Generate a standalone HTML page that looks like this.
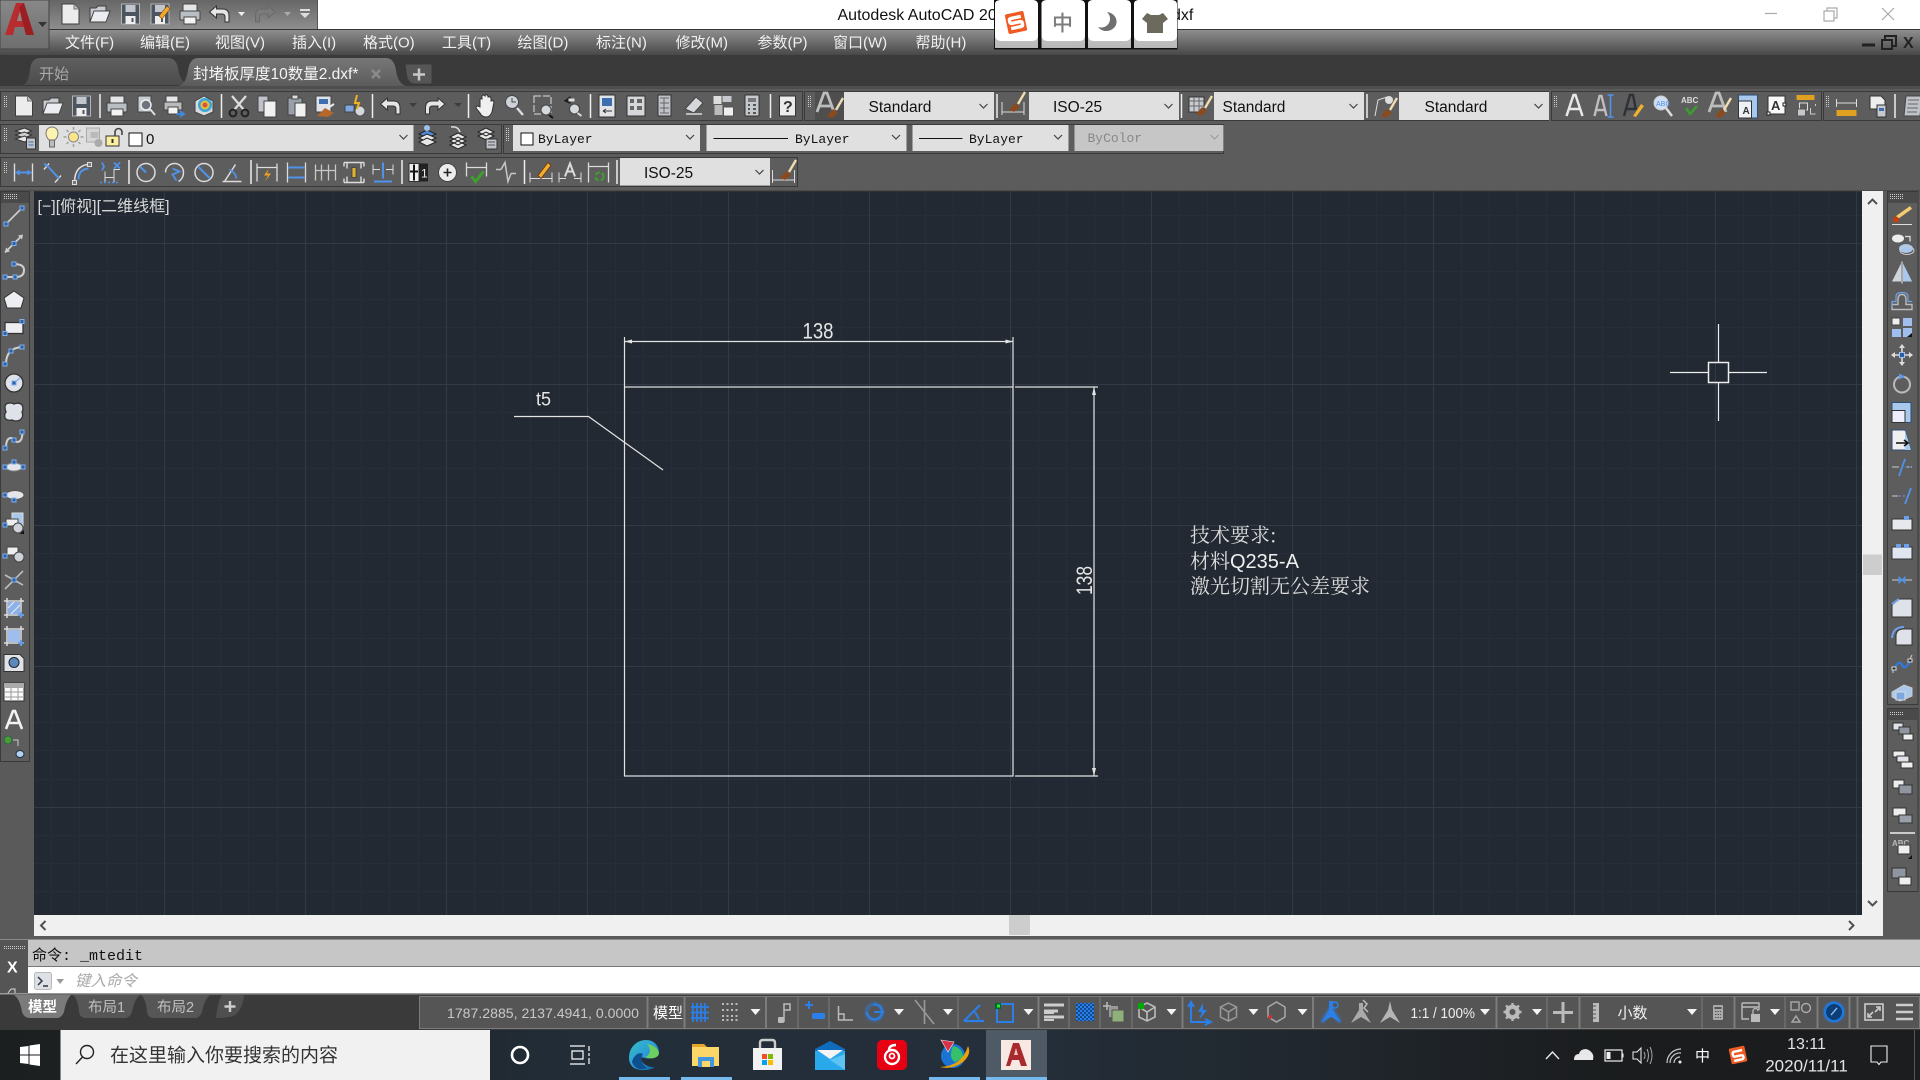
<!DOCTYPE html>
<html><head><meta charset="utf-8"><title>AutoCAD</title>
<style>
html,body{margin:0;padding:0;background:#5a5a5a;overflow:hidden}
svg{display:block}
text{font-family:"Liberation Sans","Noto Sans CJK SC",sans-serif;white-space:pre}
.m{font-size:15px;fill:#f0f0f0}
.dd{font-size:15.5px;fill:#111}
.by{font-family:"Liberation Mono","Noto Sans CJK SC",monospace;font-size:13px;fill:#111}
.cad{fill:#e6e6e6}
.song{font-family:"Noto Serif CJK SC",serif;font-size:20px;fill:#ddd}
.ln{fill:none;stroke:#e4e4e4;stroke-width:1.2}
.sep{stroke:#eee;stroke-width:1.5}
</style></head><body>
<svg xmlns="http://www.w3.org/2000/svg" width="1920" height="1080" viewBox="0 0 1920 1080">
<defs>
<linearGradient id="gq" x1="0" y1="0" x2="0" y2="1"><stop offset="0" stop-color="#666"/><stop offset="1" stop-color="#8e8e8e"/></linearGradient>
<linearGradient id="gm" x1="0" y1="0" x2="0" y2="1"><stop offset="0" stop-color="#8e8e8e"/><stop offset="1" stop-color="#484848"/></linearGradient>
<linearGradient id="ga" x1="0" y1="0" x2="0" y2="1"><stop offset="0" stop-color="#888"/><stop offset="1" stop-color="#6e6e6e"/></linearGradient>
<linearGradient id="gt" x1="0" y1="0" x2="0" y2="1"><stop offset="0" stop-color="#5f5f5f"/><stop offset="1" stop-color="#4c4c4c"/></linearGradient>
<linearGradient id="gta" x1="0" y1="0" x2="0" y2="1"><stop offset="0" stop-color="#777"/><stop offset="1" stop-color="#5c5c5c"/></linearGradient>
<linearGradient id="gk" x1="0" y1="0" x2="0" y2="1"><stop offset="0" stop-color="#e4e4e4"/><stop offset="1" stop-color="#b8b8b8"/></linearGradient>
<linearGradient id="gb" x1="0" y1="0" x2="1" y2="0"><stop offset="0" stop-color="#1b1f20"/><stop offset=".18" stop-color="#1f2529"/><stop offset=".3" stop-color="#222d38"/><stop offset=".52" stop-color="#242f3b"/><stop offset=".7" stop-color="#20262c"/><stop offset=".85" stop-color="#1a1c1d"/><stop offset="1" stop-color="#1b1d1e"/></linearGradient>
<linearGradient id="gedge" x1="0" y1="0" x2="1" y2="1"><stop offset="0" stop-color="#35c1c4"/><stop offset=".5" stop-color="#2d9cd8"/><stop offset="1" stop-color="#0c5aa0"/></linearGradient>
<pattern id="grid" x="164" y="243" width="141" height="141" patternUnits="userSpaceOnUse">
<path d="M28.5 0V141M56.5 0V141M84.5 0V141M113.5 0V141M0 28.5H141M0 56.5H141M0 84.5H141M0 113.5H141" stroke="#272e39" fill="none"/>
<path d="M.5 0V141M0 .5H141" stroke="#323a48" fill="none"/>
</pattern>
<pattern id="dots" width="2" height="2" patternUnits="userSpaceOnUse"><rect width="1" height="1" fill="#ccc"/></pattern>
<pattern id="dotsb" width="4" height="4" patternUnits="userSpaceOnUse"><rect width="2" height="2" fill="#134a8f"/><rect x="2" y="2" width="2" height="2" fill="#134a8f"/></pattern>
<filter id="glow" x="-30%" y="-30%" width="160%" height="160%"><feGaussianBlur stdDeviation="1.2"/></filter>

<!-- common toolbar icons -->
<g id="new"><path d="M-8-10H4L9-5V10H-8Z" fill="#ececec" stroke="#3d3d3d"/><path d="M4-10V-5H9" fill="#bbb" stroke="#777"/></g>
<g id="open"><path d="M-10 8V-6H-4L-2-8H6V-3H9L5 8Z" fill="#c9ccd2" stroke="#3d3d3d"/><path d="M-10 8L-6-3H10L6 8Z" fill="#ecedf0" stroke="#444"/></g>
<g id="save"><rect x="-9" y="-10" width="18" height="20" fill="#4d5560" stroke="#b5b5b5"/><rect x="-5" y="-9" width="10" height="7" fill="#c3c6cc"/><rect x="-5" y="2" width="10" height="8" fill="#eee"/><rect x="1" y="4" width="2" height="4" fill="#555"/></g>
<g id="saveas"><use href="#save"/><path d="M-1 2L7-8L10-5L2 5Z" fill="#f0a830" stroke="#7a4a10" stroke-width=".6"/></g>
<g id="print"><rect x="-7" y="-10" width="14" height="7" fill="#e4e6e9" stroke="#444"/><rect x="-10" y="-3" width="20" height="9" rx="1" fill="#b9bec5" stroke="#444"/><rect x="-6" y="3" width="12" height="7" fill="#f3f3f3" stroke="#444"/></g>
<g id="preview"><path d="M-8-10H5V6H-8Z" fill="#c8ccd2" stroke="#444"/><circle cx="0" cy="-1" r="5" fill="#6d747e" stroke="#eee" stroke-width="1.5"/><path d="M4 3L9 9" stroke="#ddd" stroke-width="2"/></g>
<g id="plot"><rect x="-8" y="-10" width="12" height="6" fill="#e4e6e9" stroke="#444"/><rect x="-10" y="-4" width="18" height="8" fill="#bbb" stroke="#444"/><rect x="-6" y="1" width="10" height="7" fill="#f3f3f3" stroke="#444"/><path d="M2 8H9M6 5L10 8L6 11" fill="none" stroke="#3d8be0" stroke-width="1.8"/></g>
<g id="p3d"><path d="M-9-5L0-10L9-5V6L0 10L-9 6Z" fill="#d7d9dd" stroke="#444"/><circle cx="1" cy="-1" r="7" fill="#3aa7d8"/><circle cx="1" cy="-1" r="4.5" fill="#e6c23a"/><circle cx="1" cy="-1" r="2.5" fill="#d6553a"/></g>
<g id="cut"><path d="M-7-10L5 4M7-10L-5 4" stroke="#ddd" stroke-width="2.2"/><circle cx="-6" cy="7" r="3.4" fill="none" stroke="#222" stroke-width="2"/><circle cx="6" cy="7" r="3.4" fill="none" stroke="#222" stroke-width="2"/></g>
<g id="copy"><path d="M-9-10H1V6H-9Z" fill="#bfc3c9" stroke="#444"/><path d="M-3-5H9V11H-3Z" fill="#f1f1f1" stroke="#444"/></g>
<g id="paste"><rect x="-9" y="-8" width="14" height="17" fill="#9aa0a8" stroke="#444"/><rect x="-5" y="-11" width="6" height="4" fill="#ddd" stroke="#444"/><path d="M-2-3H9V11H-2Z" fill="#f1f1f1" stroke="#444"/></g>
<g id="match"><rect x="-9" y="-10" width="15" height="16" fill="#dfe3e9" stroke="#444"/><rect x="-6" y="-7" width="9" height="5" fill="#3d6fb0"/><path d="M-8 10L0 2L9 7L3 11Z" fill="#b5682a"/><path d="M3 2L9-2" stroke="#e8e8e8" stroke-width="2"/></g>
<g id="blockb"><rect x="-10" y="-1" width="9" height="7" fill="#7ea7e0" stroke="#444"/><circle cx="5" cy="5" r="5" fill="#d5d8dd" stroke="#555"/><path d="M2-11L0-3H4L2 3" fill="none" stroke="#f0b020" stroke-width="2"/></g>
<g id="undo"><path d="M-10-2L-3-8V-5H3Q9.500-5 9.500 2V8H5.500V3Q5.500 0 2.500 0H-3V4Z" fill="#e6e6e6" stroke="#333"/></g>
<g id="redo"><path d="M10-2L3-8V-5H-3Q-9.500-5-9.500 2V8H-5.500V3Q-5.500 0-2.500 0H3V4Z" fill="#e6e6e6" stroke="#333"/></g>
<g id="undog"><path d="M-10-2L-3-8V-5H3Q9.500-5 9.500 2V8H5.500V3Q5.500 0 2.500 0H-3V4Z" fill="#7b7b7b" stroke="#6a6a6a"/></g>
<g id="tri"><path d="M-4-2H4L0 2Z" fill="#3d3d3d"/></g>
<g id="tril"><path d="M-4-2H4L0 2Z" fill="#cfcfcf"/></g>
<g id="pan"><path d="M-6 1V-6Q-6-8-4-7V-10Q-3-12-1-10V-11Q1-12 2-10V-9Q4-10 5-8V-5Q7-6 8-4L6 6Q4 11 0 11Q-4 11-6 7L-10 2Q-10 0-8 0Z" fill="#f0f0f0" stroke="#333"/></g>
<g id="zoomr"><circle cx="-2" cy="-4" r="6.5" fill="#cfd3d9" stroke="#444"/><path d="M-2-8V-4H2" fill="none" stroke="#444"/><path d="M3 2L9 9" stroke="#ddd" stroke-width="2.4"/></g>
<g id="zoomw"><rect x="-9" y="-10" width="17" height="18" fill="none" stroke="#ddd" stroke-dasharray="7 2"/><circle cx="3" cy="4" r="5" fill="#d5d8dd" stroke="#444"/><path d="M6 9L10 12" stroke="#111" stroke-width="2"/></g>
<g id="zoomp"><path d="M-9-5L-2-10V-2Z" fill="#1f1f1f"/><path d="M-4-6H2" stroke="#ddd" stroke-width="3"/><circle cx="2" cy="3" r="5" fill="#d5d8dd" stroke="#444"/><path d="M5 7L9 10" stroke="#ddd" stroke-width="2"/></g>
<g id="props"><rect x="-8" y="-11" width="16" height="22" fill="#e1e3e6" stroke="#333"/><rect x="-5" y="-8" width="10" height="8" fill="#3d6fb0"/><path d="M-4 5H5M-4 5L-1 3M-4 5L-1 7" stroke="#333" fill="none"/></g>
<g id="dc"><rect x="-9" y="-10" width="18" height="20" fill="#d5d7db" stroke="#333"/><path d="M-6-7H-2V-3H-6ZM1-7H6V-3H1ZM-6 0H-2V4H-6ZM1 0H6V4H1Z" fill="#666"/></g>
<g id="pal"><rect x="-7" y="-11" width="13" height="21" fill="#bfc3c9" stroke="#333"/><path d="M-5-8H4M-5-3H4M-5 2H4M-5 7H4M-1-8V7" stroke="#666"/></g>
<g id="sheet"><path d="M-9 3L2-9L9-3L0 7Z" fill="#d5d7db" stroke="#444"/><path d="M-8 7H8V9H-8Z" fill="#bbb"/></g>
<g id="mark"><rect x="-10" y="-10" width="8" height="8" fill="#ddd"/><rect x="-1" y="-10" width="9" height="6" fill="#c5c8cd"/><rect x="-9" y="-1" width="8" height="10" fill="#bbb"/><rect x="0" y="1" width="10" height="9" fill="#eee" stroke="#555"/></g>
<g id="calc"><rect x="-7" y="-11" width="14" height="21" rx="1" fill="#c5c8cd" stroke="#333"/><rect x="-4" y="-8" width="8" height="4" fill="#777"/><path d="M-4-1H-2M1-1H4M-4 3H-2M1 3H4M-4 7H-2M1 7H4" stroke="#555" stroke-width="2"/></g>
<g id="help"><rect x="-8" y="-10" width="16" height="20" fill="#ececec" stroke="#333"/><text x="-4.5" y="6" font-size="16" font-weight="700" fill="#333">?</text></g>
<g id="brush"><path d="M-7 10L-1 3L4 7L-2 12Z" fill="#8a4a20"/><path d="M2 4L9-8" stroke="#f0ddb0" stroke-width="2.4"/></g>
<g id="atext"><path d="M-9 8L-2-11H1L8 8M-6 2H5" fill="none" stroke="#bdbdbd" stroke-width="2.8"/></g>
<g id="dimicon"><path d="M-11-2V11M11-2V11M-11 8H11" stroke="#dcdcdc" fill="none"/></g>
<!-- row 1 text group -->
<g id="A1"><path d="M-8 10L-1-11H1L8 10M-5 3H5" fill="none" stroke="#e8e8e8" stroke-width="2.5"/></g>
<g id="A2"><path d="M-9 10L-4-10H-2L3 10M-7 4H1" fill="none" stroke="#bdbdbd" stroke-width="2.4"/><path d="M7-11V11M4-11H10M4 11H10" stroke="#4f93ea" fill="none" stroke-width="1.6"/></g>
<g id="A3"><path d="M-9 10L-3-11H0L3 4M-6 3H2" fill="none" stroke="#2e3237" stroke-width="2.4"/><path d="M0 10L8-2L11 0L3 11Z" fill="#f0b030"/></g>
<g id="A4"><circle cx="-2" cy="-3" r="7" fill="#cfdff5" stroke="#ccc"/><text x="-7" y="0" font-size="7" fill="#4f93ea">ABC</text><path d="M3 2L9 10" stroke="#ddd" stroke-width="2.4"/></g>
<g id="A5"><text x="-10" y="-3" font-size="8" font-weight="700" fill="#ddd">ABC</text><path d="M-5 2L-1 8L6 0" fill="none" stroke="#39a02c" stroke-width="2.4"/></g>
<g id="A7"><rect x="-10" y="-11" width="19" height="23" fill="#a8c8ec" stroke="#2d4d78"/><path d="M-10-5H3V12H-10Z" fill="#eef2f6" stroke="#333"/><text x="-6" y="8" font-size="10" font-weight="700" fill="#333">A</text></g>
<g id="A8"><rect x="-9" y="-10" width="17" height="18" fill="#fafafa" stroke="#333"/><text x="-6" y="4" font-size="13" font-weight="700" fill="#333">A</text><rect x="6" y="-3" width="3" height="3" fill="#eee" stroke="#222"/><rect x="-10" y="6" width="3" height="3" fill="#eee" stroke="#222"/></g>
<g id="A9"><rect x="-10" y="-11" width="18" height="5" fill="#e0a020"/><rect x="-7" y="-3" width="8" height="7" fill="none" stroke="#ddd"/><rect x="-9" y="3" width="8" height="7" fill="#c5c8cd" stroke="#555"/><path d="M4 2V8H9M9 0V-2" stroke="#ccc" fill="none"/></g>
<g id="meas"><path d="M-10-7V1M10-7V1M-10-3H10" stroke="#ddd" fill="none"/><rect x="-10" y="4" width="20" height="6" fill="#e0a020"/></g>
<g id="lay2"><path d="M-6-10H5L9-6V3H-6Z" fill="#eee" stroke="#333"/><rect x="1" y="-1" width="9" height="12" fill="#c5c8cd" stroke="#333"/><rect x="3" y="2" width="5" height="3" fill="#3d6fb0"/></g>
<g id="scroll"><path d="M-7-10H9L7 10H-9Z" fill="#bfc3c9" stroke="#444"/><path d="M-5-6H6M-5-2H5M-6 2H5M-6 6H4" stroke="#666"/></g>
<!-- row 2 -->
<g id="layerm"><path d="M-9-7L0-10L7-7L0-4Z" fill="#e4e4e4" stroke="#333"/><path d="M-9-3L0-6L7-3L0 0Z" fill="#d0d0d0" stroke="#333"/><path d="M-9 1L0-2L7 1L0 4Z" fill="#e4e4e4" stroke="#333"/><rect x="2" y="0" width="9" height="11" fill="#bfc3c9" stroke="#333"/><path d="M4 4H9M4 7H9" stroke="#3d6fb0"/></g>
<g id="lamp"><path d="M-3 3Q-6 0-6-4A6 6 0 0 1 6-4Q6 0 3 3Z" fill="#fdf3b0" stroke="#777"/><rect x="-2.500" y="3" width="5" height="7" fill="#bbb" stroke="#666"/></g>
<g id="sun"><circle r="5" fill="#fbe58a" stroke="#888"/><path d="M0-10V-7M0 7V10M-10 0H-7M7 0H10M-7-7L-5-5M5 5L7 7M-7 7L-5 5M5-5L7-7" stroke="#a0a0a0" stroke-width="1.5"/></g>
<g id="free"><rect x="-8" y="-9" width="13" height="14" fill="#d5d5d5" stroke="#aaa"/><rect x="-4" y="-5" width="8" height="6" fill="#bbb"/><circle cx="4" cy="6" r="4" fill="#aaa"/></g>
<g id="lock"><rect x="-8" y="-1" width="13" height="10" fill="#fcf0a0" stroke="#333"/><rect x="-2.500" y="2" width="2" height="4" fill="#333"/><path d="M1-1V-5A3.500 3.500 0 0 1 8-5V-2" fill="none" stroke="#444" stroke-width="1.6"/></g>
<g id="lay3"><path d="M-9-4L-1-8L8-4L-1 0Z" fill="#4f8bd8" stroke="#222"/><path d="M-9 0L-1-4L8 0L-1 4Z" fill="#e8e8e8" stroke="#222"/><path d="M-9 4L-1 0L8 4L-1 8Z" fill="#e8e8e8" stroke="#222"/><circle cx="-1" cy="-10" r="3" fill="#9ec0ea"/></g>
<g id="lay4"><path d="M-8-1L0-5L8-1L0 3ZM-8 3L0-1L8 3L0 7ZM-8 7L0 3L8 7L0 11Z" fill="#e8e8e8" stroke="#222"/><path d="M-7-11Q0-12 2-6" fill="none" stroke="#ddd" stroke-width="1.5"/></g>
<g id="lay5"><path d="M-9-6L-1-10L7-6L-1-2ZM-9-2L-1-6L7-2L-1 2Z" fill="#e8e8e8" stroke="#222"/><rect x="-1" y="1" width="11" height="10" fill="#bfc3c9" stroke="#333"/><path d="M1 4H8M1 7H8" stroke="#555"/></g>
<!-- dim icons -->
<g id="d1" fill="none" stroke="#dcdcdc"><path d="M-9-9V9M9-9V9" stroke-width="1.4"/><path d="M-8 0H8" stroke="#4f93ea" stroke-width="2"/><path d="M-8 0L-4-3V3ZM8 0L4-3V3Z" fill="#4f93ea" stroke="none"/></g>
<g id="d2" fill="none"><path d="M-9-3L-4-9M2 10L8 3" stroke="#dcdcdc" stroke-width="1.4"/><path d="M-5-6L6 6" stroke="#4f93ea" stroke-width="2"/><path d="M-9-9L-5-6" stroke="#4f93ea" stroke-width="2"/></g>
<g id="d3" fill="none"><path d="M-7 10Q-7-6 6-8" stroke="#dcdcdc" stroke-width="1.6"/><path d="M-3 7Q-3-3 7-4" stroke="#4f93ea" stroke-width="2"/><rect x="-9" y="8" width="4" height="4" fill="#777" stroke="#ddd"/><rect x="6" y="-10" width="4" height="4" fill="#777" stroke="#ddd"/></g>
<g id="d4" fill="none"><path d="M-6 10V-1M-6 5H3V-3H9M3-3V10" stroke="#dcdcdc"/><path d="M-9-10L-7-6L-9-2M3-10L9-4M9-10L3-4" stroke="#4f93ea" stroke-width="1.8"/><path d="M-11 10H9" stroke="#4f93ea" stroke-dasharray="2 2" stroke-width="1.5"/></g>
<g id="d5" fill="none"><circle r="9" stroke="#dcdcdc" stroke-width="1.5"/><path d="M0 0L-6-6" stroke="#4f93ea" stroke-width="2"/></g>
<g id="d6" fill="none"><path d="M-9 0A9 9 0 0 1 9 0Q9 6 4 9" stroke="#dcdcdc" stroke-width="1.5"/><path d="M-2-4L5-1L-2 2L2 8" stroke="#4f93ea" stroke-width="1.8"/></g>
<g id="d7" fill="none"><circle r="9" stroke="#dcdcdc" stroke-width="1.5"/><path d="M-6-6L6 6" stroke="#4f93ea" stroke-width="2"/></g>
<g id="d8" fill="none"><path d="M-10 9H9M-8 9L3-8" stroke="#dcdcdc" stroke-width="1.5"/><path d="M-3-3Q3 0 4 6" stroke="#4f93ea" stroke-width="1.8"/></g>
<g id="d9" fill="none"><path d="M-10-9V9M10-9V9M-10-5H10" stroke="#dcdcdc" stroke-width="1.3"/><path d="M2-4L-3 3H1L-2 9L4 1H0Z" fill="#f0a020"/></g>
<g id="d10" fill="none"><path d="M-9-10V10M9-10V10" stroke="#dcdcdc" stroke-width="1.3"/><path d="M-8-5H8M-8 5H8" stroke="#4f93ea" stroke-width="2"/></g>
<g id="d11" fill="none" stroke="#c8c8c8"><path d="M-10-8V8M-4-8V8M3-8V8M10-8V8M-10-2H10" stroke-width="1.3"/></g>
<g id="d12" fill="none"><path d="M-10-10H10M-10 10H10M-10-10V-6M10-10V-6M-10 6V10M10 6V10M-7-10V-4M7-10V-4M-7 4V10M7 4V10" stroke="#dcdcdc" stroke-width="1.4"/><rect x="-2" y="-5" width="4" height="10" fill="#e0b030" stroke="#333" stroke-width=".7"/></g>
<g id="d13" fill="none"><path d="M0-10V6M-9 9H9" stroke="#4f93ea" stroke-width="2"/><path d="M-10-3H-3M3-3H10" stroke="#dcdcdc"/><path d="M-10-8V2M10-8V2" stroke="#dcdcdc"/></g>
<g id="d14"><rect x="-9" y="-9" width="10" height="18" fill="#eee" stroke="#333"/><rect x="1" y="-9" width="9" height="18" fill="#222"/><path d="M-4-8V8M-8-1H0" stroke="#111" stroke-width="2"/><text x="3" y="5" font-size="12" fill="#eee">1</text></g>
<g id="d15"><circle r="9" fill="#ececec" stroke="#444"/><path d="M-4 0H4M0-4V4" stroke="#222" stroke-width="1.6"/></g>
<g id="d16" fill="none"><path d="M-10-10V4M10-10V4M-10-5H10" stroke="#dcdcdc" stroke-width="1.3"/><path d="M-5 4L-1 9L7-1" stroke="#3da02c" stroke-width="3"/></g>
<g id="d17" fill="none"><path d="M-10-3H-5M5 1H10" stroke="#c8c8c8" stroke-width="1.5"/><path d="M-5-3L-1-10L2 9L5 1" stroke="#c8c8c8" stroke-width="1.5"/></g>
<g id="d18" fill="none"><path d="M-11 0V10M11 0V10M-11 6H11" stroke="#dcdcdc"/><path d="M-3 3L7-10L10-7L0 6Z" fill="#f0b030" stroke="#7a3a10"/></g>
<g id="d19" fill="none"><path d="M-11 0V10M11 0V10M-11 6H-4M4 6H11" stroke="#dcdcdc"/><path d="M-5 4L0-9L5 4M-3-1H3" stroke="#dcdcdc" stroke-width="2"/></g>
<g id="d20" fill="none"><path d="M-10-10V10M10-10V10M-10-6H10" stroke="#dcdcdc" stroke-width="1.3"/><circle cx="1" cy="4" r="4" stroke="#3da02c" stroke-width="2" stroke-dasharray="5 2"/></g>
<!-- left tools -->
<g id="bq"><rect x="-2" y="-2" width="4" height="4" fill="#2d5fa8" stroke="#7fb0f0"/></g>
<g id="l1"><path d="M-8 8L8-8" stroke="#cfcfcf" stroke-width="1.6"/><use href="#bq" x="-8" y="8"/><use href="#bq" x="8" y="-8"/></g>
<g id="l2"><path d="M-9 9L8-8" stroke="#cfcfcf" stroke-width="1.8"/><path d="M-9 9L-8 4L-4 8ZM9-9L4-8L8-4Z" fill="#cfcfcf"/><use href="#bq"/></g>
<g id="l3"><path d="M-8 6H2Q10 6 10-1Q10-7 0-7" fill="none" stroke="#cfcfcf" stroke-width="2"/><use href="#bq" x="-9" y="6"/><use href="#bq" x="1" y="6"/><use href="#bq" x="0" y="-7"/></g>
<g id="l4"><path d="M0-8L10-1L7 9H-7L-10-1Z" fill="#eceef2" stroke="#333"/></g>
<g id="l5"><rect x="-9" y="-5" width="18" height="11" fill="#eceef2" stroke="#333" stroke-width="1.3"/><use href="#bq" x="-9" y="6"/><use href="#bq" x="8" y="-6"/></g>
<g id="l6"><path d="M-8 9Q-8-7 8-8" fill="none" stroke="#cfcfcf" stroke-width="2"/><use href="#bq" x="-9" y="9"/><use href="#bq" x="-3" y="-4"/><use href="#bq" x="8" y="-8"/></g>
<g id="l7"><circle r="9" fill="#dfe2e8" stroke="#333" stroke-width="1.3"/><path d="M0 0L6-5" stroke="#7fb0f0" stroke-width="1.4"/><use href="#bq"/></g>
<g id="l8"><path d="M-8-8Q-3-10 0-8Q5-10 8-7Q10-3 8 0Q10 5 6 8Q2 10-2 8Q-7 9-9 6Q-10 2-8 0Q-10-5-8-8Z" fill="#dfe2e8" stroke="#333" stroke-width="1.3"/></g>
<g id="l9"><path d="M-8 8Q-8-2-3-2Q0-2 1 1Q3 3 6 1Q9-2 8-8" fill="none" stroke="#cfcfcf" stroke-width="2"/><use href="#bq" x="-9" y="8"/><use href="#bq" x="0" y="0"/><use href="#bq" x="8" y="-8"/></g>
<g id="l10"><ellipse rx="8" ry="4" fill="#e4e6ea" stroke="#888"/><use href="#bq" x="-9"/><use href="#bq" x="9"/><use href="#bq" y="-5"/></g>
<g id="l11"><ellipse cx="1" rx="9" ry="4.5" fill="#e4e6ea" stroke="#555"/><use href="#bq" x="-9"/><use href="#bq" y="5"/></g>
<g id="l12"><rect x="-2" y="-11" width="11" height="13" fill="#a8c8ec" stroke="#ddd"/><rect x="-8" y="-5" width="12" height="7" fill="#eee" stroke="#444"/><ellipse cx="4" cy="4" rx="5" ry="5" fill="#cfd2d8" stroke="#444"/><use href="#bq" x="-9" y="1"/><path d="M6 10H10V6Z" fill="#111"/></g>
<g id="l13"><rect x="-7" y="-7" width="11" height="8" fill="#eee" stroke="#444"/><ellipse cx="5" cy="3" rx="5" ry="5" fill="#cfd2d8" stroke="#444"/><use href="#bq" x="-9" y="2"/></g>
<g id="l14"><path d="M-9 9L9-9" stroke="#bbb" stroke-width="1.6"/><path d="M-9-5L9 5" stroke="#bbb" stroke-width="1.6"/><use href="#bq"/></g>
<g id="l15"><path d="M-10-7H10M-10 7H10M-7-10V10M7-10V10" stroke="#ddd" stroke-width="1.5"/><rect x="-6" y="-6" width="12" height="12" fill="#8cb0e8"/><path d="M-6 0L0-6M-3 6L6-3" stroke="#e8eefc"/><path d="M7 4V10M4 7H10" stroke="#5d9bf0" stroke-width="1.5"/></g>
<g id="l16"><path d="M-10-7H10M-10 7H10M-7-10V10M7-10V10" stroke="#ddd" stroke-width="1.5"/><rect x="-6" y="-6" width="12" height="12" fill="#9fbeee"/><path d="M7 4V10M4 7H10" stroke="#5d9bf0" stroke-width="1.5"/></g>
<g id="l17"><path d="M-10-9H6L10-5V8H-10Z" fill="#dfe2e8" stroke="#333"/><circle cy="-1" r="5" fill="#5d88bc" stroke="#222"/></g>
<g id="l18"><rect x="-10" y="-9" width="20" height="18" fill="#fafafa" stroke="#333"/><rect x="-10" y="-9" width="20" height="5" fill="#aaa"/><path d="M-3-4V9M4-4V9M-10 0H10M-10 5H10" stroke="#999"/></g>
<g id="l19"><path d="M-8 9L-1-9H1L8 9M-5 3H5" fill="none" stroke="#f2f2f2" stroke-width="2.6"/></g>
<g id="l20"><circle cx="-6" cy="-8" r="4" fill="#4e9a34" stroke="#264"/><path d="M-1-8H4V-2" fill="none" stroke="#ccc"/><ellipse cx="6" cy="6" rx="4" ry="3.5" fill="#b5d0f0" stroke="#234"/></g>
<!-- right tools -->
<g id="r1"><path d="M-5 2L9-8" stroke="#f4cc70" stroke-width="3.5"/><circle cx="-6" cy="4" r="3" fill="#c8400f"/><path d="M-10 9H10" stroke="#ddd"/></g>
<g id="r2"><ellipse cx="-4" cy="-5" rx="6" ry="4" fill="#eee"/><path d="M3-7H8V-2" fill="none" stroke="#ddd" stroke-width="1.3"/><ellipse cx="4" cy="5" rx="7" ry="4.500" fill="#a8c8ec"/><ellipse cx="5" cy="7" rx="7" ry="4" fill="none" stroke="#ccc"/></g>
<g id="r3"><path d="M-1-9V9H-10ZM1-9V9H10Z" fill="#cfd3da"/><path d="M1-9V9H10Z" fill="#a8c8ec"/><path d="M0-11V11" stroke="#eee"/></g>
<g id="r4"><path d="M-10 8V3H-4V-2Q-4-7 0-7T4-2V3H10V8Z" fill="none" stroke="#bbb" stroke-width="1.4"/><path d="M-10 6V0H-6V-5Q-6-9 0-9T6-5V0H10" fill="none" stroke="#6da0e8" stroke-width="1.3"/></g>
<g id="r5"><rect x="-10" y="-10" width="8" height="7" fill="#eee" stroke="#444"/><rect x="1" y="-10" width="9" height="8" fill="#9fbeee"/><rect x="-10" y="1" width="9" height="8" fill="#9fbeee"/><path d="M1 0H10V9H1Z" fill="#9fbeee"/><path d="M5 9H10V5Z" fill="#111"/></g>
<g id="r6"><path d="M0-11L3-7H-3ZM0 11L3 7H-3ZM-11 0L-7-3V3ZM11 0L7-3V3Z" fill="#ddd"/><path d="M-7 0H7M0-7V7" stroke="#ddd" stroke-width="1.6"/><rect x="-2.5" y="-2.5" width="5" height="5" fill="#2d5fa8" stroke="#9ec0ee"/></g>
<g id="r7"><circle r="8" fill="none" stroke="#bbb" stroke-width="2"/><path d="M-3-11L3-8L-3-5Z" fill="#5d9bf0"/></g>
<g id="r8"><rect x="-10" y="-10" width="19" height="20" fill="#a8c8ec" stroke="#2d4d78"/><rect x="-10" y="-2" width="13" height="12" fill="#eef" stroke="#333"/></g>
<g id="r9"><path d="M-10-10H3L9 10H-10Z" fill="#f0f0f0" stroke="#2d4d78"/><path d="M3-10L9 10H3Z" fill="#a8c8ec"/><path d="M-6 3H5M2 0L6 3L2 6" fill="none" stroke="#111" stroke-width="1.6"/></g>
<g id="r10"><path d="M-10-1H-3M3-1H10" stroke="#ccc"/><path d="M-3 8L3-9" stroke="#4f93ea" stroke-width="1.8"/><path d="M3-1H10" stroke="#4f93ea" stroke-dasharray="2 2"/></g>
<g id="r11"><path d="M-10 0H-4" stroke="#ccc"/><path d="M-3 0H4" stroke="#6da0e8" stroke-dasharray="2 2"/><path d="M3 8L9-8" stroke="#4f93ea" stroke-width="1.8"/></g>
<g id="r12"><rect x="-10" y="-5" width="20" height="11" fill="#e6e8ee" stroke="#333"/><rect x="2" y="-8" width="5" height="4" fill="#6da0e8"/></g>
<g id="r13"><rect x="-10" y="-5" width="20" height="12" fill="#dfe6f0" stroke="#333"/><rect x="-6" y="-8" width="5" height="4" fill="#6da0e8"/><rect x="2" y="-8" width="5" height="4" fill="#6da0e8"/></g>
<g id="r14"><path d="M-10 0H10" stroke="#ccc"/><path d="M-3-3L0 0L-3 3ZM3-3L0 0L3 3Z" fill="#4f93ea" stroke="#4f93ea"/></g>
<g id="r15"><path d="M-10 9V-3L-3-9H10V9Z" fill="#dfe2e8" stroke="#333"/><path d="M-10-4L-3-9" stroke="#6da0e8" stroke-width="2"/></g>
<g id="r16"><path d="M-6 9V0Q-6-7 2-7H10V9Z" fill="#dfe2e8" stroke="#333"/><path d="M-10 2Q-9-9 2-9" fill="none" stroke="#6da0e8" stroke-width="2"/></g>
<g id="r17"><path d="M-8 5Q-3-5 0 1T8-3" fill="none" stroke="#2f7ade" stroke-width="2.200"/><rect x="-10" y="3" width="4" height="3" fill="#222" stroke="#ddd"/><rect x="6" y="-5" width="4" height="3" fill="#222" stroke="#ddd"/><path d="M-9 9V6M8-5L10-9" stroke="#ccc"/></g>
<g id="r18"><path d="M-10 0L2-7L10-4V4L-2 9L-10 5Z" fill="#a8c8ec" stroke="#ccc"/><rect x="-6" y="0" width="9" height="8" fill="#7ea7e0" stroke="#ddd"/></g>
<g id="r19"><rect x="-9" y="-9" width="10" height="7" fill="#dfe2e8" stroke="#333"/><rect x="-3" y="-5" width="11" height="7" fill="#8f96a0" stroke="#333"/><rect x="1" y="2" width="10" height="6" fill="#eee" stroke="#333"/></g>
<g id="r20"><rect x="-9" y="-9" width="12" height="6" fill="#eee" stroke="#333"/><rect x="-5" y="-4" width="12" height="6" fill="#dfe2e8" stroke="#333"/><rect x="-1" y="2" width="12" height="6" fill="#eee" stroke="#333"/></g>
<g id="r21"><rect x="-9" y="-8" width="11" height="8" fill="#eee" stroke="#333"/><rect x="-3" y="-3" width="13" height="9" fill="#8f96a0" stroke="#333"/></g>
<g id="r22"><rect x="-9" y="-8" width="13" height="8" fill="#eee" stroke="#333"/><rect x="-3" y="-1" width="13" height="8" fill="#9aa0a9" stroke="#333"/></g>
<g id="r23"><text x="-10" y="-3" font-size="8" font-weight="700" fill="#bbb">ABC</text><rect x="-4" y="-4" width="12" height="9" fill="#eee" stroke="#333"/><path d="M6 10H10V6Z" fill="#111"/></g>
<g id="r24"><rect x="-10" y="-9" width="14" height="10" fill="#8f96a0" stroke="#333"/><rect x="-3" y="0" width="12" height="8" fill="#eee" stroke="#333"/></g>
<!-- status arrow -->
<g id="sa"><path d="M-5-3H5L0 3Z" fill="#f4f4f4"/></g>
<g id="chev"><path d="M-4-2L0 2L4-2" fill="none" stroke="#444" stroke-width="1.2"/></g>
</defs>

<!-- base -->
<rect width="1920" height="1080" fill="#5a5a5a"/>
<!-- title bar -->
<rect width="1920" height="29" fill="#fff"/>
<rect y="29" width="1920" height="1.5" fill="#333"/>
<text x="837.5" y="20" font-size="16" fill="#111">Autodesk AutoCAD 2021 - 封</text>
<text x="1172" y="20" font-size="16" fill="#111">dxf</text>
<rect x="0" y="0" width="317" height="29" fill="url(#gq)"/>
<rect x="317" y="0" width="1" height="29" fill="#555"/>
<rect y="30" width="1920" height="25" fill="url(#gm)"/>
<rect x="0" y="0" width="49" height="49" fill="url(#ga)" stroke="#444"/>
<path d="M5 35L16 3H24L34 35H26L24 27H15L13 35Z" fill="#b72d2d"/><path d="M17 21H22L20 11Z" fill="#888"/><path d="M24 3L34 35H26L19 7Z" fill="#9b1f22"/>
<path d="M38 22H47L42.500 27Z" fill="#333"/>
<g>
<use href="#new" x="70" y="14"/><use href="#open" x="100" y="14"/><use href="#save" x="130.500" y="14"/><use href="#saveas" x="160" y="14"/><use href="#print" x="190" y="14"/><use href="#undo" x="219.500" y="14"/><path d="M238 12H245L241.500 16Z" fill="#eee"/><use href="#undog" x="265" y="14" transform="translate(530 0) scale(-1 1)"/><path d="M284 12H291L287.500 16Z" fill="#aaa"/><path d="M300 9H310V11H300ZM300 13H310L305 18Z" fill="#ddd"/>
</g>
<!-- window controls -->
<path d="M1765 13.500H1777" stroke="#aaa" stroke-width="1.200"/>
<path d="M1824 11H1834V21H1824ZM1827 11V8H1837V18H1834" fill="none" stroke="#aaa" stroke-width="1.200"/>
<path d="M1882 8L1894 20M1894 8L1882 20" stroke="#aaa" stroke-width="1.200"/>
<!-- menu -->
<text class="m" x="65" y="47.500">文件(F)</text><text class="m" x="140" y="47.500">编辑(E)</text><text class="m" x="215" y="47.500">视图(V)</text><text class="m" x="292" y="47.500">插入(I)</text><text class="m" x="363" y="47.500">格式(O)</text><text class="m" x="442" y="47.500">工具(T)</text><text class="m" x="517.500" y="47.500">绘图(D)</text><text class="m" x="596" y="47.500">标注(N)</text><text class="m" x="675.500" y="47.500">修改(M)</text><text class="m" x="757.500" y="47.500">参数(P)</text><text class="m" x="833" y="47.500">窗口(W)</text><text class="m" x="915.500" y="47.500">帮助(H)</text>
<path d="M1862 45H1875" stroke="#222" stroke-width="3"/><path d="M1882 40H1892V49H1882ZM1885 40V36H1896V46H1892" fill="none" stroke="#222" stroke-width="2"/><text x="1903" y="48" font-size="16" font-weight="700" fill="#222">X</text>
<!-- tab bar -->
<rect y="55" width="1920" height="31" fill="#3a3a3a"/>
<path d="M22 85Q28 85 30 70Q31 58 40 58H168Q176 58 178 68Q180 83 190 85Z" fill="url(#gt)"/>
<path d="M178 86Q186 85 188 70Q190 58 198 58H386Q394 58 396 70Q398 84 406 86Z" fill="url(#gta)"/>
<path d="M405 64H432V84H415Q407 84 406 72Z" fill="#565656" stroke="#3a3a3a"/>
<text x="39" y="79" font-size="15" fill="#a8a8a8">开始</text>
<text x="193" y="79" font-size="15.500" fill="#f4f4f4">封堵板厚度10数量2.dxf*</text>
<path d="M372 70L380 78M380 70L372 78" stroke="#8c8c8c" stroke-width="2.400"/>
<path d="M413 74.500H425M419 68.500V80.500" stroke="#c8c8c8" stroke-width="2.500"/>

<!-- toolbars bg -->
<rect y="86" width="1920" height="105" fill="#5c5c5c"/>
<rect y="86" width="1920" height="3" fill="#4e4e4e"/>
<g fill="#5d5d5d" stroke="#3a3a3a"><rect x=".5" y="91.500" width="802" height="29"/><rect x="804.500" y="91.500" width="744" height="29"/><rect x="1551.500" y="91.500" width="270" height="29"/><rect x="1823.500" y="91.500" width="97" height="29"/>
<rect x=".5" y="124.500" width="501" height="29"/><rect x="503.500" y="124.500" width="720" height="29"/>
<rect x=".5" y="157.500" width="797" height="29"/></g>
<g fill="url(#dots)"><rect x="3" y="95" width="4" height="13"/><rect x="807" y="95" width="4" height="13"/><rect x="1554" y="95" width="4" height="13"/><rect x="1826" y="95" width="4" height="13"/><rect x="3" y="128" width="4" height="13"/><rect x="505" y="128" width="4" height="13"/><rect x="3" y="161" width="4" height="13"/></g>
<g class="sep" stroke="#eee" stroke-width="1.500"><path d="M100 94V118M221.500 94V118M372.500 94V118M468.500 94V118M590.500 94V118M770.500 94V118M997 94V118M1181.500 94V118M1367 94V118M1895 94V118M129 160V184M251 160V184M402 160V184M524.500 160V184M617 160V184"/></g>
<!-- row 1 icons -->
<g>
<use href="#new" x="23.500" y="106"/><use href="#open" x="53" y="106"/><use href="#save" x="81.500" y="106"/><use href="#print" x="117" y="106"/><use href="#preview" x="146" y="106"/><use href="#plot" x="174" y="106"/><use href="#p3d" x="204" y="106"/><use href="#cut" x="239" y="106"/><use href="#copy" x="267" y="106"/><use href="#paste" x="297" y="106"/><use href="#match" x="325" y="106"/><use href="#blockb" x="355" y="106"/><use href="#undo" x="390.500" y="106"/><use href="#tri" x="413" y="105"/><use href="#redo" x="435" y="106"/><use href="#tri" x="458" y="105"/><use href="#pan" x="486" y="106"/><use href="#zoomr" x="514" y="106"/><use href="#zoomw" x="543" y="106"/><use href="#zoomp" x="572.500" y="106"/><use href="#props" x="607" y="106"/><use href="#dc" x="636" y="106"/><use href="#pal" x="665" y="106"/><use href="#sheet" x="694" y="106"/><use href="#mark" x="723.500" y="106"/><use href="#calc" x="752" y="106"/><use href="#help" x="787.500" y="106"/>
</g>
<!-- style dropdowns -->
<g fill="#e0e0e0"><rect x="844" y="92" width="150" height="28"/><rect x="1029" y="92" width="150" height="28"/><rect x="1214" y="92" width="150" height="28"/><rect x="1399" y="92" width="150" height="28"/></g>
<rect x="815" y="92" width="29" height="28" fill="#4e4e4e"/>
<use href="#atext" x="826" y="104"/><use href="#brush" x="834" y="106"/>
<use href="#dimicon" x="1013" y="104"/><use href="#brush" x="1016" y="100"/>
<rect x="1189" y="97" width="15" height="15" fill="#c8ccd2" stroke="#333"/><path d="M1189 101H1204M1194 97V112M1199 97V112M1189 106H1204" stroke="#666"/><use href="#brush" x="1203" y="104"/>
<path d="M1375 116L1378 100L1387 97" fill="none" stroke="#ddd"/><circle cx="1389" cy="100" r="4" fill="#ddd"/><use href="#brush" x="1388" y="106"/>
<text class="dd" x="868.500" y="112">Standard</text><text class="dd" x="1053" y="112">ISO-25</text><text class="dd" x="1222.500" y="112">Standard</text><text class="dd" x="1424.500" y="112">Standard</text>
<use href="#chev" x="983.500" y="106"/><use href="#chev" x="1168.500" y="106"/><use href="#chev" x="1353.500" y="106"/><use href="#chev" x="1538.500" y="106"/>
<!-- text group -->
<rect x="1561" y="92" width="260" height="28" fill="#5d5d5d"/>
<use href="#A1" x="1574.500" y="106"/><use href="#A2" x="1603.500" y="106"/><use href="#A3" x="1633" y="106"/><use href="#A4" x="1663" y="106"/><use href="#A5" x="1691" y="106"/><use href="#atext" x="1718" y="104"/><use href="#brush" x="1722" y="106"/><use href="#A7" x="1748.500" y="106"/><use href="#A8" x="1777" y="106"/><use href="#A9" x="1806.500" y="106"/>
<use href="#meas" x="1846.500" y="106"/><use href="#lay2" x="1876" y="106"/><use href="#scroll" x="1913" y="106"/>
<!-- row 2 -->
<use href="#layerm" x="24.500" y="138"/>
<rect x="39" y="125" width="374.500" height="26" fill="#e0e0e0"/>
<use href="#lamp" x="52" y="137"/><use href="#sun" x="73.500" y="137"/><use href="#free" x="94.500" y="137"/><use href="#lock" x="114" y="137"/>
<rect x="129" y="133" width="13" height="13" fill="#fff" stroke="#111"/>
<text x="146" y="144" font-size="15" fill="#111">0</text>
<use href="#chev" x="403.500" y="137"/>
<use href="#lay3" x="428" y="138"/><use href="#lay4" x="458" y="138"/><use href="#lay5" x="487" y="138"/>
<g fill="#e0e0e0"><rect x="513" y="125" width="187" height="26"/><rect x="706.500" y="125" width="200" height="26"/><rect x="912.500" y="125" width="156" height="26"/></g>
<rect x="1074.500" y="125" width="149" height="26" fill="#c6c6c6"/>
<rect x="521" y="133" width="12" height="12" fill="#fff" stroke="#111"/>
<text class="by" x="538" y="143">ByLayer</text><use href="#chev" x="690" y="137"/>
<path d="M713.500 138.500H788M919 138.500H962.500" stroke="#111"/>
<text class="by" x="795" y="143">ByLayer</text><use href="#chev" x="896" y="137"/>
<text class="by" x="969" y="143">ByLayer</text><use href="#chev" x="1058" y="137"/>
<text class="by" x="1087.500" y="142" style="fill:#888">ByColor</text><path d="M1210.500 135L1214.500 139L1218.500 135" fill="none" stroke="#999"/>
<!-- row 3 -->
<g>
<use href="#d1" x="23.500" y="172.500"/><use href="#d2" x="53" y="172.500"/><use href="#d3" x="81.500" y="172.500"/><use href="#d4" x="111" y="172.500"/><use href="#d5" x="146" y="172.500"/><use href="#d6" x="174.500" y="172.500"/><use href="#d7" x="204" y="172.500"/><use href="#d8" x="232.500" y="172.500"/><use href="#d9" x="267" y="172.500"/><use href="#d10" x="296.500" y="172.500"/><use href="#d11" x="325.500" y="172.500"/><use href="#d12" x="354" y="172.500"/><use href="#d13" x="383" y="172.500"/><use href="#d14" x="418" y="172.500"/><use href="#d15" x="447.500" y="172.500"/><use href="#d16" x="476.500" y="172.500"/><use href="#d17" x="506" y="172.500"/><use href="#d18" x="541" y="172.500"/><use href="#d19" x="570" y="172.500"/><use href="#d20" x="598.500" y="172.500"/>
</g>
<rect x="620" y="158" width="150" height="27.500" fill="#e0e0e0"/>
<text class="dd" x="644" y="178">ISO-25</text><use href="#chev" x="759.500" y="172"/>
<use href="#dimicon" x="783.500" y="172"/><use href="#brush" x="787" y="168"/>

<!-- drawing -->
<rect x="34" y="191" width="1828" height="724" fill="#222932"/>
<rect x="34" y="191" width="1828" height="724" fill="url(#grid)"/>
<rect x="0" y="190.500" width="1920" height="1" fill="#3a3a3a"/>
<text x="37.500" y="211.500" font-size="16" fill="#d8d8d8">[−][俯视][二维线框]</text>
<g class="ln">
<rect x="624.500" y="387" width="388.500" height="389"/>
<path d="M624.500 337V387M1013 337V387M624.500 341.500H1013M1015 387H1098M1015 776H1098M1094 387V776M514 416.500H588.500L663 470"/>
</g>
<path d="M624.500 341.500L632 339.500V343.500ZM1013 341.500L1005.500 339.500V343.500ZM1094 387L1092 395H1096ZM1094 776L1092 768H1096Z" fill="#e4e4e4"/>
<text x="802.500" y="338.500" font-size="22" fill="#e6e6e6" textLength="31" lengthAdjust="spacingAndGlyphs">138</text>
<text x="536" y="405.500" font-size="19" fill="#e6e6e6" textLength="15" lengthAdjust="spacingAndGlyphs">t5</text>
<text transform="translate(1092 595) rotate(-90)" font-size="22" fill="#e6e6e6" textLength="29" lengthAdjust="spacingAndGlyphs">138</text>
<text class="song" x="1190" y="542">技术要求:</text>
<text class="song" x="1190" y="568">材料<tspan style="font-family:'Liberation Sans',sans-serif" fill="#f0f0f0">Q235-A</tspan></text>
<text class="song" x="1190" y="593">激光切割无公差要求</text>
<path d="M1718.500 324V362M1718.500 382V421M1670 372.500H1708M1729 372.500H1767" stroke="#eee" stroke-width="1.200" fill="none"/>
<rect x="1708.500" y="362.500" width="20" height="20" fill="none" stroke="#eee" stroke-width="1.500"/>

<!-- left toolbar -->
<rect x="0" y="191" width="34" height="749" fill="#5a5a5a"/>
<rect x=".5" y="191.500" width="29" height="570" fill="#5d5d5d" stroke="#3a3a3a"/>
<rect x="1" y="192" width="28" height="11" fill="#4a4a4a"/><rect x="3" y="194" width="14" height="5" fill="url(#dots)"/>
<g>
<use href="#l1" x="14" y="216"/><use href="#l2" x="14" y="243.500"/><use href="#l3" x="14" y="271"/><use href="#l4" x="14" y="299"/><use href="#l5" x="14" y="327.500"/><use href="#l6" x="14" y="355"/><use href="#l7" x="14" y="383"/><use href="#l8" x="14" y="412"/><use href="#l9" x="14" y="440"/><use href="#l10" x="14" y="467"/><use href="#l11" x="14" y="495"/><use href="#l12" x="14" y="524"/><use href="#l13" x="14" y="554"/><use href="#l14" x="14" y="580"/><use href="#l15" x="14" y="608"/><use href="#l16" x="14" y="636"/><use href="#l17" x="14" y="663.500"/><use href="#l18" x="14" y="692"/><use href="#l19" x="14" y="720"/><use href="#l20" x="14" y="748"/>
</g>
<!-- right toolbar -->
<rect x="1883" y="191" width="37" height="749" fill="#5a5a5a"/>
<rect x="1887.500" y="191.500" width="30.500" height="513" fill="#5d5d5d" stroke="#3a3a3a"/>
<rect x="1887.500" y="708.500" width="30.500" height="183" fill="#5d5d5d" stroke="#3a3a3a"/>
<rect x="1888" y="192" width="30" height="11" fill="#4a4a4a"/><rect x="1890" y="194" width="14" height="5" fill="url(#dots)"/>
<rect x="1888" y="709" width="30" height="11" fill="#4a4a4a"/><rect x="1890" y="711" width="14" height="5" fill="url(#dots)"/>
<g>
<use href="#r1" x="1902" y="215.500"/><use href="#r2" x="1902" y="243.500"/><use href="#r3" x="1902" y="272.500"/><use href="#r4" x="1902" y="301.500"/><use href="#r5" x="1902" y="328"/><use href="#r6" x="1902" y="355"/><use href="#r7" x="1902" y="384.500"/><use href="#r8" x="1902" y="412.500"/><use href="#r9" x="1902" y="440"/><use href="#r10" x="1902" y="468"/><use href="#r11" x="1902" y="496"/><use href="#r12" x="1902" y="524"/><use href="#r13" x="1902" y="552"/><use href="#r14" x="1902" y="580"/><use href="#r15" x="1902" y="608"/><use href="#r16" x="1902" y="636"/><use href="#r17" x="1902" y="664"/><use href="#r18" x="1902" y="692"/>
<use href="#r19" x="1902" y="732"/><use href="#r20" x="1902" y="760"/><use href="#r21" x="1902" y="788"/><use href="#r22" x="1902" y="816"/><path d="M1890 833H1915" stroke="#eee" stroke-width="1.500"/><use href="#r23" x="1902" y="849"/><use href="#r24" x="1902" y="877"/>
</g>
<!-- scrollbars -->
<rect x="1862" y="191" width="21" height="745" fill="#f0f0f0"/>
<rect x="1863" y="554.500" width="19" height="20.500" fill="#cdcdcd"/>
<path d="M1868 204L1872.500 199.500L1877 204M1868 901L1872.500 905.500L1877 901" fill="none" stroke="#505050" stroke-width="2"/>
<rect x="34" y="915" width="1849" height="21" fill="#f0f0f0"/>
<rect x="1009" y="915" width="21" height="20" fill="#cdcdcd"/>
<path d="M45.500 921L41 925.500L45.500 930M1849 921L1853.500 925.500L1849 930" fill="none" stroke="#505050" stroke-width="2"/>
<rect y="936" width="1920" height="4" fill="#5a5a5a"/><rect y="939" width="1920" height="1" fill="#8a8a8a"/>
<!-- command -->
<rect x="0" y="940" width="28" height="54" fill="#555"/>
<rect x="3" y="945" width="22" height="5" fill="url(#dots)"/>
<text x="7" y="972.500" font-size="16" font-weight="700" fill="#fff">X</text>
<path d="M8 993L11 989M11 989H15V993" stroke="#ddd" fill="none"/>
<rect x="28" y="940" width="1892" height="26" fill="#c6c6c6"/>
<rect x="28" y="966" width="1892" height="1" fill="#777"/>
<rect x="28" y="967" width="1892" height="26" fill="#fff"/>
<text x="32" y="960" style="font-family:'Liberation Mono','Noto Sans CJK SC',monospace" font-size="15" fill="#111">命令: _mtedit</text>
<rect x="34.500" y="972.500" width="17" height="17" rx="2" fill="#dde0e4" stroke="#bbb"/>
<path d="M38 977L42 981L38 985M43 986H48" fill="none" stroke="#334" stroke-width="1.500"/>
<path d="M56.500 979H64L60 984Z" fill="#999"/>
<text x="75" y="986" font-size="15.500" fill="#aaa" style="font-style:italic">键入命令</text>
<!-- status row -->
<rect y="993" width="1920" height="37" fill="#3a3a3a"/>
<rect y="993" width="1920" height="1.500" fill="#999"/>
<path d="M14 995H71Q66 1000 64 1012Q62 1017 58 1018H30Q24 1018 22 1012Q20 999 14 995Z" fill="#7b7b7b"/>
<path d="M73 995H140Q134 1000 132 1012Q130 1017 126 1018H86Q80 1018 79 1012Q78 999 73 995Z" fill="#565656"/>
<path d="M141 995H210Q204 1000 202 1012Q200 1017 196 1018H154Q148 1018 147 1012Q146 999 141 995Z" fill="#565656"/>
<path d="M222 995H244Q243 1008 236 1014Q232 1018 216 1018Q218 1000 222 995Z" fill="#4f4f4f"/>
<text x="28" y="1012" font-size="14.500" font-weight="700" fill="#fff">模型</text>
<text x="88" y="1012" font-size="14.500" fill="#c0c0c0">布局1</text>
<text x="157" y="1012" font-size="14.500" fill="#c0c0c0">布局2</text>
<path d="M224.500 1006.500H235.500M230 1001V1012" stroke="#ccc" stroke-width="2.400"/>
<!-- status bar -->
<rect x="419.500" y="996.500" width="1500" height="32" fill="#555" stroke="#7c7c7c"/>
<path d="M647 997V1028M648 997V1028M684 997V1028M685 997V1028M765.500 997V1028M766.500 997V1028M798 997V1028M829 997V1028M958 997V1028M1038 997V1028M1039 997V1028M1069 997V1028M1100 997V1028M1132 997V1028M1182 997V1028M1183 997V1028M1312.500 997V1028M1313.500 997V1028M1496 997V1028M1497 997V1028M1547 997V1028M1579 997V1028M1580 997V1028M1702 997V1028M1734 997V1028M1735 997V1028M1785 997V1028M1817 997V1028M1818 997V1028M1849 997V1028M1850 997V1028M1857 997V1028M1858 997V1028" stroke="#7c7c7c" fill="none"/>
<text x="447" y="1018" font-size="14" fill="#c8c8c8" textLength="192" lengthAdjust="spacingAndGlyphs">1787.2885, 2137.4941, 0.0000</text>
<text x="653" y="1018" font-size="15" fill="#fff">模型</text>
<!-- grid -->
<g stroke="#2a7fe8" stroke-width="1.800" fill="none"><path d="M691 1012.500H709M691 1007H709M691 1018H709M693 1003V1022M697 1003V1022M701 1003V1022M705 1003V1022"/></g>
<path d="M722 1004H740M722 1010H740M722 1016H740M722 1020H740" stroke="#bbb" stroke-width="2" stroke-dasharray="2 2.500" fill="none"/>
<use href="#sa" x="755.500" y="1012"/>
<path d="M784 1022V1004H790V1010H784" fill="none" stroke="#bbb" stroke-width="1.500"/><rect x="778" y="1017" width="6" height="6" rx="1" fill="#bbb"/>
<path d="M809 1001V1009M805 1005H813" stroke="#2a7fe8" stroke-width="2"/><rect x="812" y="1013" width="13" height="6" rx="1.500" fill="#2a7fe8"/>
<path d="M838.500 1006V1020H853M838.500 1014H844V1020" fill="none" stroke="#bbb" stroke-width="1.500"/>
<g filter="url(#glow)" opacity=".6"><circle cx="874.500" cy="1012" r="8" fill="none" stroke="#2a7fe8" stroke-width="3"/></g>
<path d="M867 1012A7.500 7.500 0 1 0 873 1004.500M874 1012H884" fill="none" stroke="#2a7fe8" stroke-width="2"/>
<use href="#sa" x="899" y="1012"/>
<path d="M915 1000L934 1024M924.500 1000V1024" stroke="#999" stroke-width="1.600"/>
<use href="#sa" x="948" y="1012"/>
<path d="M964 1021H984M964 1021L980 1005" stroke="#2a7fe8" stroke-width="2.200" fill="none"/><path d="M975 1012L979 1019" stroke="#2a7fe8" stroke-width="2"/>
<rect x="997" y="1004" width="16" height="18" fill="none" stroke="#2a7fe8" stroke-width="2"/><rect x="995" y="1003" width="6" height="6" fill="#063"/><rect x="997" y="1004.500" width="3" height="3" fill="#2e2"/>
<use href="#sa" x="1028.500" y="1012"/>
<path d="M1044 1005H1064M1044 1011H1058M1044 1017H1064" stroke="#ccc" stroke-width="3"/><rect x="1044" y="1011" width="10" height="3" fill="#ccc"/><rect x="1044" y="1019" width="10" height="2" fill="#ccc"/>
<rect x="1076" y="1003" width="18" height="18" fill="#2a7fe8"/><rect x="1076" y="1003" width="18" height="18" fill="url(#dotsb)"/>
<path d="M1107 1002V1010M1103 1006H1111" stroke="#bbb" stroke-width="1.500"/><rect x="1109" y="1006" width="9" height="11" fill="#999"/><rect x="1112" y="1010" width="12" height="12" fill="#8fb07a" stroke="#555"/>
<path d="M1147 1003L1155 1007V1017L1147 1021L1139 1017V1007ZM1147 1012V1021M1139 1007L1147 1012L1155 1007" fill="none" stroke="#bbb" stroke-width="1.600"/><rect x="1138" y="1003" width="6" height="6" fill="#0a0"/>
<use href="#sa" x="1171.500" y="1012"/>
<path d="M1191 1003V1022H1210" fill="none" stroke="#2a7fe8" stroke-width="2"/><path d="M1188 1007L1191 1002L1194 1007M1205 1019L1211 1022L1205 1025" fill="none" stroke="#2a7fe8" stroke-width="2"/><path d="M1203 1003L1198 1012H1202L1199 1020L1207 1010H1203Z" fill="#2a7fe8"/>
<path d="M1228.500 1003L1236.500 1007V1017L1228.500 1021L1220.500 1017V1007ZM1228.500 1012V1021M1220.500 1007L1228.500 1012L1236.500 1007" fill="none" stroke="#999" stroke-width="1.500"/>
<use href="#sa" x="1253.500" y="1012"/>
<path d="M1276.500 1002L1285 1007V1017L1276.500 1022L1268 1017V1007Z" fill="none" stroke="#aaa" stroke-width="1.500"/><circle cx="1270" cy="1017" r="2" fill="#c33"/>
<use href="#sa" x="1302.500" y="1012"/>
<g filter="url(#glow)" opacity=".6"><path d="M1322 1022L1331 1008L1340 1022" fill="none" stroke="#2a7fe8" stroke-width="4"/></g>
<path d="M1321 1023L1329 1010V1001H1333V1010L1341 1023L1331 1017Z" fill="#2a7fe8"/><circle cx="1335" cy="1005" r="3" fill="#555" stroke="#2a7fe8" stroke-width="1.500"/>
<path d="M1351 1023L1359 1010V1003H1363V1010L1371 1023L1361 1017Z" fill="#aaa"/><path d="M1363 1000L1367 1004L1364 1008L1368 1012" fill="none" stroke="#bbb" stroke-width="1.500"/>
<path d="M1380 1023L1388 1010L1390 1001L1392 1010L1400 1023L1390 1017Z" fill="#b5b5b5"/>
<text x="1410.500" y="1018" font-size="14.500" fill="#eee" textLength="64.500" lengthAdjust="spacingAndGlyphs">1:1 / 100%</text>
<use href="#sa" x="1485" y="1012"/>
<g transform="translate(1512.500 1012)"><circle r="5.500" fill="none" stroke="#bbb" stroke-width="3.500"/><path d="M0-9V9M-9 0H9M-6.500-6.500L6.500 6.500M-6.500 6.500L6.500-6.500" stroke="#bbb" stroke-width="2.400"/><circle r="3" fill="#555"/></g>
<use href="#sa" x="1537" y="1012"/>
<path d="M1563 1002V1023M1553 1012.500H1573" stroke="#bbb" stroke-width="3"/>
<rect x="1593" y="1003" width="6" height="19" fill="#bbb"/><path d="M1593 1006H1596M1593 1010H1596M1593 1014H1596M1593 1018H1596" stroke="#555"/>
<text x="1617.500" y="1018" font-size="15" fill="#f2f2f2">小数</text>
<use href="#sa" x="1692" y="1012"/>
<rect x="1713" y="1005" width="10" height="15" rx="1" fill="#aaa"/><rect x="1714.500" y="1007" width="7" height="2" fill="#555"/><path d="M1715 1011.500H1721M1715 1014.500H1721M1715 1017.500H1721" stroke="#555" stroke-dasharray="1.500 1"/>
<path d="M1742 1003H1759V1010M1742 1003V1019H1749M1742 1007H1759" fill="none" stroke="#bbb" stroke-width="1.400"/><rect x="1751" y="1014" width="9" height="8" fill="#bbb"/><path d="M1753 1014V1011A2.500 2.500 0 0 1 1758 1011" fill="none" stroke="#bbb" stroke-width="1.300"/>
<use href="#sa" x="1775" y="1012"/>
<rect x="1791" y="1002" width="8" height="8" fill="none" stroke="#aaa" stroke-width="1.400"/><circle cx="1806" cy="1008" r="4.500" fill="none" stroke="#aaa" stroke-width="1.400"/><path d="M1796 1016L1800 1022H1792Z" fill="none" stroke="#aaa" stroke-width="1.400"/>
<g filter="url(#glow)" opacity=".7"><circle cx="1834" cy="1012" r="9" fill="none" stroke="#2a7fe8" stroke-width="3"/></g>
<circle cx="1834" cy="1012" r="9" fill="#0d3e76" stroke="#1a7be8" stroke-width="2"/><path d="M1831 1015L1837 1008" stroke="#88bdf0" stroke-width="1.400"/>
<rect x="1865" y="1004" width="18" height="16" fill="none" stroke="#ccc" stroke-width="1.600"/><path d="M1868 1017L1873 1012M1868 1013V1017H1872M1880 1007L1875 1012M1876 1007H1880V1011" fill="none" stroke="#ccc" stroke-width="1.600"/>
<path d="M1896 1005H1913M1896 1012H1913M1896 1019H1913" stroke="#ccc" stroke-width="2.600"/>

<!-- taskbar -->
<rect y="1030" width="1920" height="50" fill="url(#gb)"/>
<path d="M20 1047L28.500 1046V1054.500H20ZM29.500 1045.500L40 1044V1054.500H29.500ZM20 1055.500H28.500V1064L20 1063ZM29.500 1055.500H40V1066L29.500 1064.500Z" fill="#fff"/>
<rect x="60.500" y="1030" width="429.500" height="50" fill="#f1f1f1"/>
<circle cx="87" cy="1052" r="6.500" fill="none" stroke="#222" stroke-width="1.400"/><path d="M82.500 1057L76 1064" stroke="#222" stroke-width="1.400"/>
<text x="110" y="1061.500" font-size="19" fill="#333">在这里输入你要搜索的内容</text>
<circle cx="520" cy="1055" r="8" fill="none" stroke="#fff" stroke-width="2.600"/>
<path d="M570 1046H585M572 1051H583V1059H572ZM570 1064H585M572 1051V1059M589 1046V1051M589 1053V1056M589 1058V1064" fill="none" stroke="#fff" stroke-width="1.200"/>
<!-- edge -->
<path d="M629 1058C629 1046 638 1040 646 1040C655 1040 659 1047 659 1052C659 1059 648 1060 641 1057C640 1063 648 1068 655 1067C651 1070 646 1070 642 1070C634 1070 629 1065 629 1058Z" fill="url(#gedge)"/><path d="M647 1044C654 1045 659 1049 659 1054C657 1059 650 1059 645 1057C650 1055 652 1050 647 1044Z" fill="#6bd060"/><path d="M632 1062C634 1054 640 1052 643 1054C640 1058 641 1064 647 1068C640 1071 634 1068 632 1062Z" fill="#0d4f8f"/>
<!-- explorer -->
<path d="M692 1044H704L707 1047H719V1066H692Z" fill="#e5a62d"/><path d="M692 1047H719V1066H692Z" fill="#fbd669"/><rect x="698" y="1057" width="16" height="10" fill="#3f97df"/><rect x="702" y="1061" width="8" height="6" fill="#fbd669"/>
<!-- store -->
<path d="M753 1048H782V1070H753Z" fill="#f2f2f2"/><path d="M760 1048V1043Q760 1040 763 1040H772Q775 1040 775 1043V1048" fill="none" stroke="#ccc" stroke-width="2.400"/><rect x="762" y="1054" width="5" height="5" fill="#f25022"/><rect x="768" y="1054" width="5" height="5" fill="#7fba00"/><rect x="762" y="1060" width="5" height="5" fill="#00a4ef"/><rect x="768" y="1060" width="5" height="5" fill="#ffb900"/>
<!-- mail -->
<path d="M815 1049L830 1041L845 1049V1070H815Z" fill="#0f6cbd"/><path d="M815 1051H845V1070H815Z" fill="#2aa8ec"/><path d="M817 1050H843L830 1059Z" fill="#f5f5f5"/><path d="M830 1060L845 1070V1054Z" fill="#5cc3f3"/>
<!-- netease -->
<rect x="877" y="1040" width="30" height="30" rx="5" fill="#e60012"/><circle cx="892" cy="1057" r="7" fill="none" stroke="#fff" stroke-width="2.400"/><circle cx="892" cy="1056" r="2.500" fill="none" stroke="#fff" stroke-width="1.800"/><path d="M889 1050Q889 1045 896 1045" fill="none" stroke="#fff" stroke-width="2.400"/>
<!-- globe -->
<circle cx="953" cy="1056" r="12" fill="#1b74d4"/><path d="M953 1046Q963 1048 963 1058L955 1062Q948 1058 953 1046Z" fill="#37c06a"/><path d="M940 1067Q962 1066 968 1046Q972 1054 963 1062Q952 1070 940 1067Z" fill="#e8a210"/><path d="M941 1040L954 1042L948 1052Z" fill="#d9304a" stroke="#eee" stroke-width=".6"/>
<!-- acad -->
<rect x="986" y="1030" width="61" height="47" fill="#4e5a66"/>
<rect x="1001" y="1040" width="30" height="30" fill="#f7e9e2"/>
<path d="M1006 1066L1013 1043H1019L1027 1066H1021L1019 1060H1012L1010 1066Z" fill="#a82a2e"/><path d="M1014 1055H1018L1016 1048Z" fill="#e6c8c2"/>
<g fill="#76b9ed"><rect x="619" y="1077" width="51" height="3"/><rect x="681" y="1077" width="51" height="3"/><rect x="929" y="1077" width="51" height="3"/><rect x="986" y="1077" width="61" height="3"/></g>
<!-- tray -->
<path d="M1546 1059L1552.500 1052L1559 1059" fill="none" stroke="#eee" stroke-width="1.300"/>
<path d="M1574 1060Q1574 1054 1579 1054Q1580 1049 1586 1049Q1590 1050 1592 1053Q1594 1055 1593 1060Z" fill="#e8e8e8"/>
<rect x="1605" y="1050" width="17" height="11" fill="none" stroke="#f0f0f0" stroke-width="1.200"/><rect x="1606.500" y="1052" width="4" height="7" fill="#f0f0f0"/><rect x="1622" y="1053.500" width="1.500" height="4" fill="#f0f0f0"/>
<path d="M1633 1052H1637L1641 1048V1063L1637 1059H1633Z" fill="none" stroke="#eee"/><path d="M1644 1052Q1646 1055.500 1644 1059M1647 1049Q1650 1055.500 1647 1062M1650 1047Q1654 1055.500 1650 1064" fill="none" stroke="#aaa"/>
<path d="M1667 1063A14 14 0 0 1 1681 1049M1670 1063A10 10 0 0 1 1681 1053M1674 1063A6 6 0 0 1 1680 1057" fill="none" stroke="#ccc" stroke-width="1.200"/><circle cx="1680" cy="1062" r="1.500" fill="#eee"/>
<text x="1695" y="1061" font-size="15" fill="#fff">中</text>
<g transform="translate(1738 1055) rotate(-12)"><rect x="-8" y="-8" width="16" height="16" rx="1.500" fill="#ee5b24"/><path d="M5-4H-3Q-5-4-5-2V-1Q-5 1-3 1H3Q5 1 5 3Q5 5 3 5H-5" fill="none" stroke="#fff" stroke-width="2.400"/></g>
<text x="1806.500" y="1049" font-size="16" fill="#e4e4e4" text-anchor="middle">13:11</text>
<text x="1806.500" y="1071.500" font-size="17" fill="#e4e4e4" text-anchor="middle">2020/11/11</text>
<path d="M1871 1046H1887V1062H1881L1879 1064.500L1877 1062H1871Z" fill="none" stroke="#eee" stroke-width="1.100"/>
<path d="M1914.500 1030V1080" stroke="#555"/>

<!-- sogou -->
<rect x="994" y="0" width="183.500" height="49.500" fill="#111"/>
<g id="keys">
<path d="M995 4Q995 0 1002 0H1032Q1038 0 1038 5V48H995Z" fill="url(#gk)"/><path d="M995 4Q995 0 1002 0H1032Q1038 0 1038 5V35Q1038 41 1032 41H1002Q995 41 995 35Z" fill="#fff"/>
<path d="M1041.500 4Q1041.500 0 1048 0H1079Q1085 0 1085 5V48H1041.500Z" fill="url(#gk)"/><path d="M1041.500 4Q1041.500 0 1048 0H1079Q1085 0 1085 5V35Q1085 41 1079 41H1048Q1041.500 41 1041.500 35Z" fill="#fff"/>
<path d="M1088 4Q1088 0 1094 0H1125Q1131 0 1131 5V48H1088Z" fill="url(#gk)"/><path d="M1088 4Q1088 0 1094 0H1125Q1131 0 1131 5V35Q1131 41 1125 41H1094Q1088 41 1088 35Z" fill="#fff"/>
<path d="M1134 4Q1134 0 1140 0H1171Q1177 0 1177 5V48H1134Z" fill="url(#gk)"/><path d="M1134 4Q1134 0 1140 0H1171Q1177 0 1177 5V35Q1177 41 1171 41H1140Q1134 41 1134 35Z" fill="#fff"/>
</g>
<g transform="translate(1016 22.500) rotate(-12)"><rect x="-9.500" y="-10" width="19" height="20" rx="1.500" fill="#f05a22"/><path d="M6-5H-4Q-6-5-6-3V-2Q-6 0-4 0H4Q6 0 6 2V3Q6 5 4 5H-6" fill="none" stroke="#fff" stroke-width="3.400"/></g>
<text x="1062.500" y="30.500" font-size="21" text-anchor="middle" fill="#7c7c7c" font-weight="500">中</text>
<path d="M1107 12C1115 13 1118 20 1116 25C1113 31 1104 34 1098 27C1104 29 1110 25 1110 19C1110 16 1109 14 1107 12Z" fill="#6f6f6f"/>
<path d="M1147 13L1151 15H1159L1163 13L1168 19L1163 23V33H1147V23L1142 19Z" fill="#6b6a5c"/>
</svg>
</body></html>
